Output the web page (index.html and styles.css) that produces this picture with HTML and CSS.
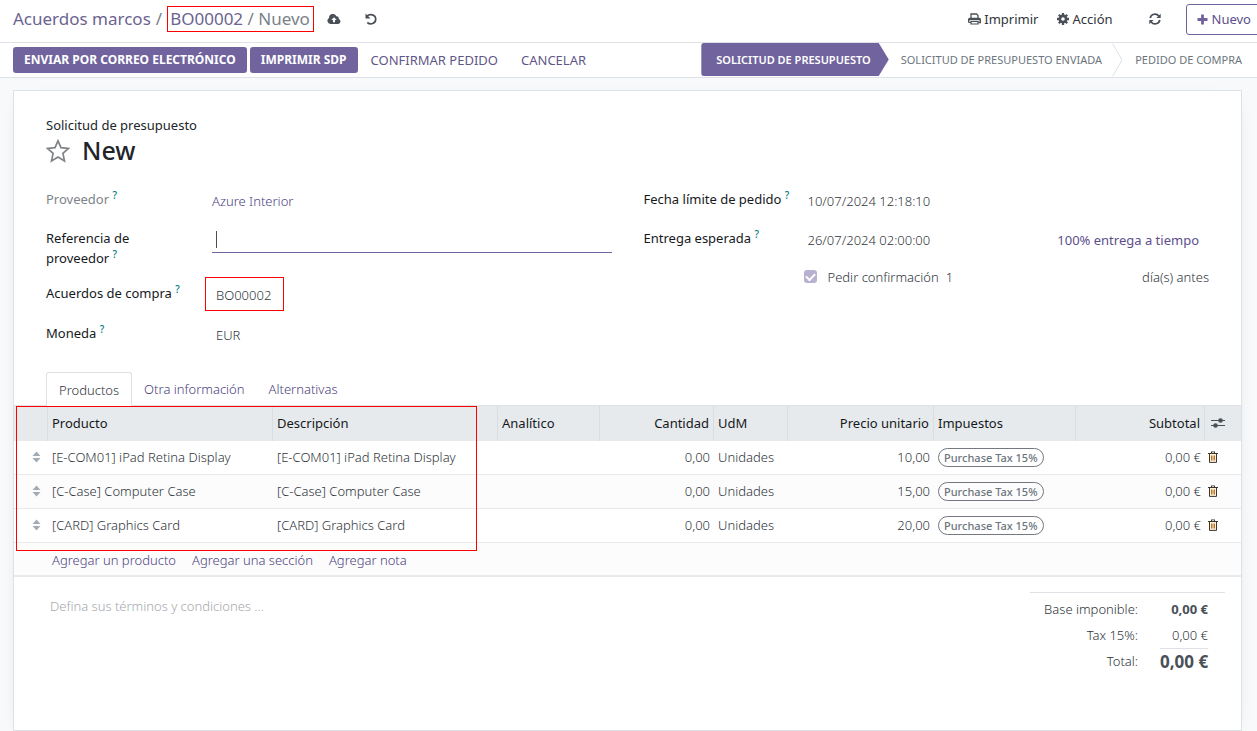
FILE: index.html
```html
<!DOCTYPE html>
<html lang="es">
<head>
<meta charset="utf-8">
<meta name="viewport" content="width=device-width, initial-scale=1">
<title>BO00002 / Nuevo</title>
<link rel="stylesheet" href="styles.css">
</head>
<body>
<svg class="sprite" aria-hidden="true">
  <symbol id="trash" viewBox="0 0 10 12"><path d="M0 2h10v1H0zM3 0.500h4V2H6V1.300H4V2H3z" fill="#3d342c"/><path d="M1.500 3v8.400h7V3" fill="#fff3dc" stroke="#3d342c"/><path d="M3.500 4.500v5M5 4.500v5M6.500 4.500v5" stroke="#bd7328" stroke-width="1"/></symbol>
  <symbol id="sort" viewBox="0 0 8 12"><path d="M4 0.500L8 5H0zM4 11.500L0 7h8z" fill="#a3acb5"/></symbol>
</svg>
<header class="control">
  <nav class="crumbs" aria-label="Ruta">
    <a href="#">Acuerdos marcos</a><span>/</span>
    <span class="marked"><a href="#">BO00002</a> / Nuevo</span>
  </nav>
  <button class="icon-button save" aria-label="Guardar">
    <svg width="14" height="12" viewBox="0 0 14 12"><path d="M3.500 11A3.300 3.300 0 0 1 2 4.900 3.900 3.900 0 0 1 9.400 3.200 2.500 2.500 0 0 1 11.800 6 2.600 2.600 0 0 1 11.200 11z" fill="#495057"/><path d="M7 4.200L4.300 7H6v2.200h2V7h1.700z" fill="#fff"/></svg>
  </button>
  <button class="icon-button" aria-label="Descartar">
    <svg width="12" height="12" viewBox="0 0 12 12" fill="none"><path d="M2 3.200C4.500 0.500 10.700 1.200 10.700 6.200 10.700 10.700 5.500 12.200 2.300 9.500" stroke="#495057" stroke-width="1.700"/><path d="M0.500 0.500v5h5z" fill="#495057"/></svg>
  </button>
  <div class="tools">
    <button class="tool"><svg width="13" height="12" viewBox="0 0 13 12" fill="none" stroke="#495057"><path d="M3 6V1h5.500L10 2.500V6" stroke-width="1.300"/><path d="M0.700 9.500V6.500Q0.700 5.500 1.700 5.500h9.600q1 0 1 1v3h-2" stroke-width="1.400"/><path d="M1 6.500h11" stroke-width="1.500"/><path d="M3 8.500h7V11H3zM0.700 9.500H3" stroke-width="1.200"/></svg>Imprimir</button>
    <button class="tool"><svg width="12" height="12" viewBox="0 0 12 12"><circle cx="6" cy="6" r="3.100" fill="none" stroke="#495057" stroke-width="2.600"/><path d="M6 0v2.500M6 9.500V12M0 6h2.500M9.500 6H12M1.800 1.800l1.700 1.700M8.500 8.500l1.700 1.700M10.200 1.800L8.500 3.500M3.500 8.500l-1.700 1.700" stroke="#495057" stroke-width="2.300"/></svg>Acción</button>
    <button class="icon-button refresh" aria-label="Actualizar"><svg width="12" height="12" viewBox="0 0 12 12" fill="none"><path d="M1.200 5C2 0.700 7.500 0 9.800 3M10.800 7C10 11.300 4.500 12 2.200 9" stroke="#495057" stroke-width="1.700"/><path d="M11.700 0.700V5H7.400zM0.300 11.300V7h4.300z" fill="#495057"/></svg></button>
    <button class="create"><svg width="11" height="11" viewBox="0 0 11 11"><path d="M5.500 0.500v10M0.500 5.500h10" stroke="#71639e" stroke-width="2.800"/></svg>Nuevo</button>
  </div>
</header>
<div class="statusbar">
  <div class="actions">
    <button class="action primary">Enviar por correo electrónico</button>
    <button class="action primary">Imprimir SdP</button>
    <button class="action">Confirmar pedido</button>
    <button class="action">Cancelar</button>
  </div>
  <div class="stages">
    <button class="stage current">Solicitud de presupuesto</button>
    <button class="stage">Solicitud de presupuesto enviada</button>
    <svg class="chevron" width="11" height="34" viewBox="0 0 11 34" fill="none"><path d="M0.500 0.500L10 17L0.500 33.500" stroke="#dee2e6"/></svg>
    <button class="stage last">Pedido de compra</button>
  </div>
</div>
<main class="sheet">
  <section class="details">
    <div class="kind">Solicitud de presupuesto</div>
    <div class="title">
      <button class="icon-button" aria-label="Prioridad"><svg width="24" height="24" viewBox="0 0 24 24" fill="none"><path d="M12 1.800L15 8.700L22.500 9.400L16.900 14.400L18.500 22L12 18.100L5.500 22L7.100 14.400L1.500 9.400L9 8.700Z" stroke="#808488" stroke-width="1.700"/></svg></button>
      <h1>New</h1>
    </div>
    <div class="groups">
      <div class="group">
        <div class="label muted">Proveedor <sup>?</sup></div><div class="value"><a href="#">Azure Interior</a></div>
        <label class="label" for="ref">Referencia de<br>proveedor <sup>?</sup></label><div><input id="ref" class="ref" type="text"></div>
        <div class="label">Acuerdos de compra <sup>?</sup></div><div><span class="agreement">BO00002</span></div>
        <div class="label">Moneda <sup>?</sup></div><div class="value inset">EUR</div>
      </div>
      <div class="group">
        <div class="label">Fecha límite de pedido <sup>?</sup></div><div class="value">10/07/2024 12:18:10</div>
        <div class="label">Entrega esperada <sup>?</sup></div><div class="value delivery"><span>26/07/2024 02:00:00</span><a class="ontime" href="#">100% entrega a tiempo</a></div>
        <div></div>
        <div class="confirm"><input id="confirm" type="checkbox" checked><label for="confirm">Pedir confirmación</label><span>1</span><span class="days">día(s) antes</span></div>
      </div>
    </div>
  </section>
  <nav class="tabs">
    <button class="tab active">Productos</button>
    <button class="tab">Otra información</button>
    <button class="tab">Alternativas</button>
  </nav>
  <div class="lines">
    <table>
      <colgroup><col class="c-handle"><col class="c-text"><col class="c-text"><col class="c-analytic"><col class="c-qty"><col class="c-unit"><col class="c-price"><col class="c-tax"><col class="c-total"><col class="c-options"></colgroup>
      <thead><tr><th></th><th>Producto</th><th>Descripción</th><th>Analítico</th><th class="num">Cantidad</th><th>UdM</th><th class="num">Precio unitario</th><th>Impuestos</th><th class="num">Subtotal</th><th class="options"><button class="icon-button" aria-label="Columnas"><svg width="14" height="12" viewBox="0 0 14 12"><path d="M0 3.500h14M0 8.500h14" stroke="#495057" stroke-width="1.200"/><circle cx="9.500" cy="3.500" r="2.300" fill="#495057"/><circle cx="4.500" cy="8.500" r="2.300" fill="#495057"/></svg></button></th></tr></thead>
      <tbody>
        <tr><td class="handle"><svg width="9" height="12"><use href="#sort"/></svg></td><td>[E-COM01] iPad Retina Display</td><td>[E-COM01] iPad Retina Display</td><td></td><td class="num">0,00</td><td>Unidades</td><td class="num">10,00</td><td><span class="tag">Purchase Tax 15%</span></td><td class="num">0,00 €</td><td class="bin"><button class="icon-button" aria-label="Eliminar"><svg width="10" height="12"><use href="#trash"/></svg></button></td></tr>
        <tr><td class="handle"><svg width="9" height="12"><use href="#sort"/></svg></td><td>[C-Case] Computer Case</td><td>[C-Case] Computer Case</td><td></td><td class="num">0,00</td><td>Unidades</td><td class="num">15,00</td><td><span class="tag">Purchase Tax 15%</span></td><td class="num">0,00 €</td><td class="bin"><button class="icon-button" aria-label="Eliminar"><svg width="10" height="12"><use href="#trash"/></svg></button></td></tr>
        <tr><td class="handle"><svg width="9" height="12"><use href="#sort"/></svg></td><td>[CARD] Graphics Card</td><td>[CARD] Graphics Card</td><td></td><td class="num">0,00</td><td>Unidades</td><td class="num">20,00</td><td><span class="tag">Purchase Tax 15%</span></td><td class="num">0,00 €</td><td class="bin"><button class="icon-button" aria-label="Eliminar"><svg width="10" height="12"><use href="#trash"/></svg></button></td></tr>
      </tbody>
    </table>
    <div class="highlight"></div>
    <div class="adders"><a href="#">Agregar un producto</a><a href="#">Agregar una sección</a><a href="#">Agregar nota</a></div>
  </div>
  <div class="footer">
    <textarea class="terms" aria-label="Términos" placeholder="Defina sus términos y condiciones ..."></textarea>
    <dl class="totals">
      <dt>Base imponible:</dt><dd class="strong">0,00 €</dd>
      <dt>Tax 15%:</dt><dd>0,00 €</dd>
      <dt>Total:</dt><dd class="grand">0,00 €</dd>
    </dl>
  </div>
</main>
</body>
</html>
```
FILE: styles.css
```css
* { box-sizing: border-box; }
body { margin: 0; background: #f8f9fa; color: #2f353b; font: 300 13px/20px "Noto Sans", "Open Sans", sans-serif; overflow-x: hidden; }
a { color: #4c4380; text-decoration: none; }
button { font: inherit; color: inherit; background: none; border: 0; padding: 0; white-space: nowrap; }
svg { display: block; flex: none; }
.sprite { position: absolute; width: 0; height: 0; }
.icon-button { display: flex; align-items: center; }

.control { display: flex; align-items: center; height: 43px; padding: 0 0 4px 13px; background: #fff; border-bottom: 1px solid #dee2e6; overflow: hidden; }
.crumbs { display: flex; align-items: center; gap: 5px; font-size: 17px; line-height: 24px; font-weight: 400; color: #7a8289; white-space: nowrap; }
.crumbs a { color: #6b6490; }
.marked { border: 1px solid #f00; padding: 0 3px 0 2px; }
.save { margin: 0 24px 0 13px; }
.tools { display: flex; align-items: center; margin-left: auto; margin-right: -10px; font-weight: 400; }
.tool { display: flex; align-items: center; gap: 3px; margin-right: 19px; }
.refresh { margin: 0 25px 0 17px; }
.create { display: flex; align-items: center; gap: 4px; height: 31px; padding: 0 15px 0 10px; border: 1px solid #71639e; border-radius: 3px; color: #5c4e8c; }

.statusbar { display: flex; justify-content: space-between; height: 35px; padding: 0 15px 0 13px; background: #fff; border-bottom: 1px solid #dee2e6; }
.actions { display: flex; align-items: center; gap: 3px; }
.action { height: 26px; padding: 0 10px; border-radius: 3px; color: #5f5787; font-weight: 400; text-transform: uppercase; }
.primary { padding: 0 11px; background: #71639e; color: #fff; font-size: 12px; font-weight: 700; }
.stages { display: flex; align-items: center; font-size: 11px; font-weight: 400; color: #6c757d; }
.stage { padding: 0 10px 0 12px; text-transform: uppercase; }
.last { padding-right: 0; }
.current { height: 33px; padding: 0 18px 0 15px; margin-bottom: 1px; background: #71639e; color: #fff; font-weight: 600; border-radius: 3px 0 0 3px; clip-path: polygon(0 0, calc(100% - 10px) 0, 100% 50%, calc(100% - 10px) 100%, 0 100%); }

.sheet { margin: 12px 15px 0 13px; min-height: 641px; background: #fff; border: 1px solid #dee2e6; box-shadow: 0 5px 20px -15px rgba(0, 0, 0, .4); }
.details { padding: 24px 32px 0; }
.kind { color: #212529; font-weight: 400; }
.title { display: flex; align-items: center; gap: 12px; height: 31px; }
h1 { margin: 0; font-size: 25px; line-height: 31px; font-weight: 500; color: #212529; }
.groups { display: grid; grid-template-columns: 1fr 1fr; gap: 32px; padding-top: 23px; }
.group { display: grid; grid-template-columns: 150px 1fr; column-gap: 16px; grid-template-rows: 39px 55px 40px 40px; }
.group + .group { grid-template-columns: 148px 1fr; grid-template-rows: 39px 39px 40px; }
.label { color: #16191c; font-weight: 400; white-space: nowrap; }
.muted { color: #808488; }
sup { font-size: 10px; line-height: 0; color: #017e84; font-weight: 500; vertical-align: 5px; }
.value { padding-top: 2px; white-space: nowrap; }
.inset { padding-left: 4px; }
.ref { display: block; width: 100%; height: 25px; padding: 2px 4px; border: 0; border-bottom: 1px solid #71639e; outline: 0; font: inherit; background: linear-gradient(#495057, #495057) 4px 3px / 1px 17px no-repeat; }
.agreement { display: inline-block; margin: -6px 0 0 -7px; padding: 7px 12px 5px 10px; border: 1px solid #f00; }
.delivery { display: flex; justify-content: space-between; padding-right: 10px; }
.ontime { color: #5c4e8c; font-weight: 400; }
.confirm { display: flex; align-items: flex-start; white-space: nowrap; }
.confirm input { appearance: none; width: 13px; height: 13px; margin: 3px 11px 0 -4px; border-radius: 3px; background: #b8b1cf; display: grid; place-items: center; }
.confirm input::after { content: ""; width: 7px; height: 4px; border: solid #fff; border-width: 0 0 2px 2px; transform: rotate(-45deg); margin-bottom: 2px; }
.confirm label { margin-right: 7px; }
.days { margin-left: auto; }

.tabs { display: flex; padding-left: 32px; margin-top: 9px; border-bottom: 1px solid #dee2e6; }
.tab { height: 33px; padding: 1px 12px 0; color: #4c4380; }
.active { height: 34px; padding-top: 0; margin-bottom: -1px; color: #2f353b; background: #fff; border: 1px solid #dee2e6; border-bottom: 0; border-radius: 3px 3px 0 0; }
.lines { position: relative; }
.highlight { position: absolute; top: 0; left: 2px; width: calc(37% + 7px); height: 145px; border: 1px solid #f00; pointer-events: none; }
table { width: 100%; table-layout: fixed; border-collapse: separate; border-spacing: 0; }
.c-handle { width: 34px; } .c-text { width: 225px; } .c-analytic { width: 102px; } .c-qty { width: 114px; } .c-unit { width: 74px; } .c-price { width: 146px; } .c-tax { width: 142px; } .c-total { width: 129px; } .c-options { width: 36px; }
th, td { height: 34px; padding: 0 4px 1px; text-align: left; white-space: nowrap; border-bottom: 1px solid #e7e9ed; }
th { height: 35px; background: #e7eaed; color: #16191c; font-weight: 400; border-right: 1px solid #dadee2; border-bottom: 0; }
th:last-child { border-right: 0; }
.num { text-align: right; }
tbody tr:nth-child(even) { background: #fcfcfc; }
td.handle { padding-left: 18px; }
td.bin { padding-left: 3px; }
.tag { display: inline-block; padding: 0 5px; border: 1px solid #747980; border-radius: 10px; font-size: 11px; line-height: 17px; font-weight: 500; color: #6c757d; }
th.options { padding-left: 6px; }
.adders { display: flex; gap: 16px; height: 34px; padding: 7px 38px 0; background: #fcfcfc; border-bottom: 2px solid #e7eaed; }
.footer { display: flex; justify-content: space-between; padding: 15px 16px 16px 36px; }
.terms { width: 50%; height: 60px; margin-top: 4px; padding: 0; border: 0; resize: none; font: inherit; background: none; }
.terms::placeholder { color: #a5a9ad; opacity: 1; }
.totals { display: grid; grid-template-columns: 108px 48px; column-gap: 22px; grid-template-rows: 26px 26px 26px; align-items: center; width: 195px; margin: 0; padding: 3px 0 0; border-top: 1px solid #dee2e6; text-align: right; white-space: nowrap; }
dd { margin: 0; }
.strong { font-weight: 700; color: #495057; }
.grand { border-top: 1px solid #dee2e6; font-size: 17px; line-height: 25px; font-weight: 700; color: #495057; }
```
